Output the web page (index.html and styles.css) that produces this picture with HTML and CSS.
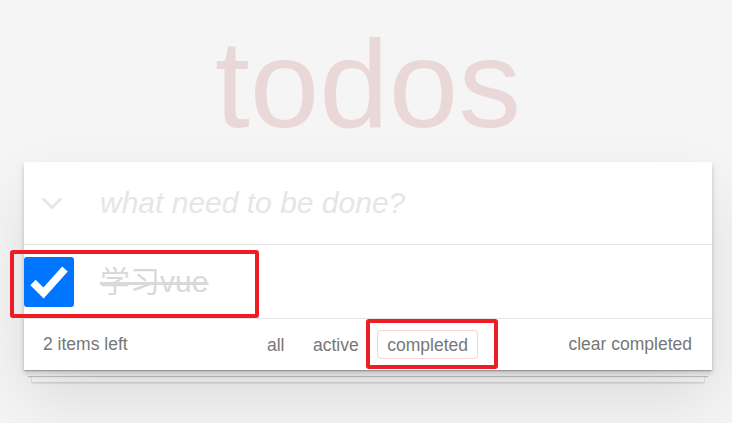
FILE: index.html
```html
<!DOCTYPE html>
<html lang="zh">
<head>
<meta charset="utf-8">
<title>todos</title>
<link rel="stylesheet" href="styles.css">
</head>
<body>
<div class="app">
  <h1 class="title">todos</h1>
  <section class="card">
    <header class="new-row">
      <svg class="toggle-all" width="22" height="13" viewBox="0 0 22 13"><polyline points="1.5,1.5 11,10.5 20.5,1.5" fill="none" stroke="#e6e6e6" stroke-width="3"/></svg>
      <input class="new-todo" type="text" placeholder="what need to be done?">
    </header>
    <ul class="list">
      <li class="item">
        <span class="check"><svg width="50" height="50" viewBox="0 0 50 50"><polyline points="9,25.5 19.5,36 41,12" fill="none" stroke="#fff" stroke-width="7.5" stroke-linejoin="miter"/></svg></span>
        <span class="label done">学习vue</span>
      </li>
    </ul>
    <footer class="footer">
      <span class="count">2 items left</span>
      <nav class="filters">
        <a class="filter">all</a>
        <a class="filter">active</a>
        <a class="filter selected">completed</a>
      </nav>
      <a class="clear">clear completed</a>
    </footer>
  </section>
</div>
<div class="mark mark-item"></div>
<div class="mark mark-filter"></div>
</body>
</html>
```
FILE: styles.css
```css
html, body {
  margin: 0;
  padding: 0;
}
body {
  background: #f5f5f5;
  font-family: "Liberation Sans", Arial, "Noto Sans CJK SC", sans-serif;
  color: #4d4d4d;
  position: relative;
  min-height: 423px;
}
.app {
  width: 688px;
  margin-left: 24px;
  padding-top: 21px;
}
.title {
  margin: 0 0 16px;
  height: 125px;
  font-size: 125px;
  line-height: 125px;
  font-weight: 100;
  text-align: center;
  color: rgba(175, 47, 47, 0.15);
}
.card {
  position: relative;
  background: #fff;
  box-shadow: 0 2.5px 5px rgba(0, 0, 0, 0.2), 0 31px 62px rgba(0, 0, 0, 0.1);
}
.new-row {
  height: 82px;
  display: flex;
  align-items: center;
  padding-left: 17px;
  box-sizing: border-box;
}
.toggle-all {
  display: block;
  flex: none;
  margin-top: 1px;
}
.new-todo {
  flex: 1;
  margin-left: 37px;
  padding: 0;
  border: none;
  outline: none;
  background: transparent;
  font-family: "Liberation Sans", Arial, sans-serif;
  font-size: 30px;
  font-style: italic;
  color: #4d4d4d;
  height: 42px;
}
.new-todo::placeholder {
  color: #e6e6e6;
  font-style: italic;
}
.list {
  list-style: none;
  margin: 0;
  padding: 0;
  border-top: 1px solid #e6e6e6;
}
.item {
  height: 73px;
  display: flex;
  align-items: center;
}
.check {
  width: 50px;
  height: 50px;
  background: #0075ff;
  border-radius: 3px;
  flex: none;
  margin-top: 1px;
}
.check svg {
  display: block;
}
.label {
  margin-left: 26px;
  font-size: 30px;
  line-height: 36px;
  font-family: "Liberation Sans", Arial, "Noto Sans CJK SC", sans-serif;
}
.label.done {
  color: #d9d9d9;
  text-decoration: line-through;
}
.footer {
  position: relative;
  height: 51px;
  border-top: 1px solid #e6e6e6;
  display: grid;
  grid-template-columns: 1fr auto 1fr;
  align-items: center;
  padding: 0 20px 0 19px;
  font-size: 17.5px;
  color: #777;
}
.footer::before {
  content: "";
  position: absolute;
  left: 0;
  right: 0;
  bottom: 0;
  height: 52px;
  z-index: -1;
  box-shadow: 0 1px 1px rgba(0, 0, 0, 0.2),
    0 10px 0 -4px #f6f6f6,
    0 11px 1px -4px rgba(0, 0, 0, 0.2),
    0 20px 0 -8px #f6f6f6,
    0 21px 2px -8px rgba(0, 0, 0, 0.2);
}
.count {
  justify-self: start;
}
.filters {
  display: flex;
  gap: 9px;
}
.filter {
  display: block;
  padding: 3.5px 8.75px;
  line-height: 20px;
  border: 1px solid transparent;
  border-radius: 4px;
  color: #777;
}
.filter.selected {
  border-color: rgba(175, 47, 47, 0.2);
}
.clear {
  justify-self: end;
  color: #777;
}
.mark {
  position: absolute;
  border: 4px solid #ee1c25;
  border-radius: 3px;
  box-sizing: border-box;
}
.mark-item {
  left: 10px;
  top: 250px;
  width: 249px;
  height: 68px;
}
.mark-filter {
  left: 366px;
  top: 319px;
  width: 132px;
  height: 50px;
}
```
